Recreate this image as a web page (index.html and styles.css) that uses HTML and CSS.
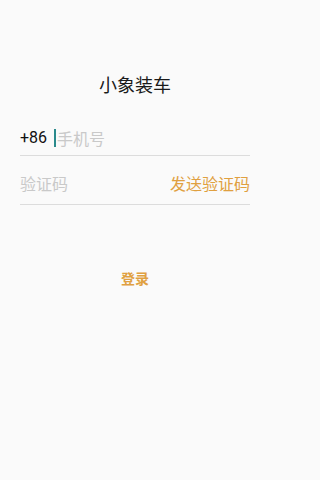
FILE: index.html
```html
<!DOCTYPE html>
<html lang="zh">
<head>
<meta charset="utf-8">
<title>小象装车</title>
<link rel="stylesheet" href="styles.css">
</head>
<body>
<div class="page">
  <h1 class="title">小象装车</h1>
  <div class="form">
    <div class="row row-phone">
      <span class="prefix">+86</span>
      <span class="cursor"></span>
      <span class="placeholder">手机号</span>
    </div>
    <div class="row row-code">
      <span class="placeholder">验证码</span>
      <span class="send">发送验证码</span>
    </div>
  </div>
  <div class="login">登录</div>
</div>
</body>
</html>
```
FILE: styles.css
```css
html, body {
  margin: 0;
  padding: 0;
  background: #fafafa;
}
body {
  font-family: "Noto Sans CJK SC", "Noto Sans", sans-serif;
  width: 270px;
  height: 480px;
}
.page {
  display: flex;
  flex-direction: column;
  padding-top: 72px;
}
.title {
  margin: 0;
  text-align: center;
  font-size: 18px;
  font-weight: 400;
  line-height: 24px;
  color: #1a1a1a;
}
.form {
  margin: 30px 20px 0;
  display: flex;
  flex-direction: column;
}
.row {
  display: flex;
  align-items: center;
  border-bottom: 1px solid #dcdcdc;
  font-size: 16px;
  line-height: 24px;
}
.row-phone {
  padding-bottom: 5px;
}
.row-code {
  padding-top: 15px;
  padding-bottom: 9px;
  justify-content: space-between;
}
.prefix {
  font-family: Roboto, "Noto Sans", sans-serif;
  color: #111;
  font-size: 16px;
}
.cursor {
  width: 2px;
  height: 18px;
  background: #2b8a8c;
  margin-left: 7px;
  margin-right: 1px;
}
.placeholder {
  color: #c9c9c9;
}
.send {
  color: #e0a040;
}
.login {
  margin-top: 63px;
  text-align: center;
  font-size: 14px;
  line-height: 20px;
  font-weight: 700;
  color: #e0a040;
}
```
